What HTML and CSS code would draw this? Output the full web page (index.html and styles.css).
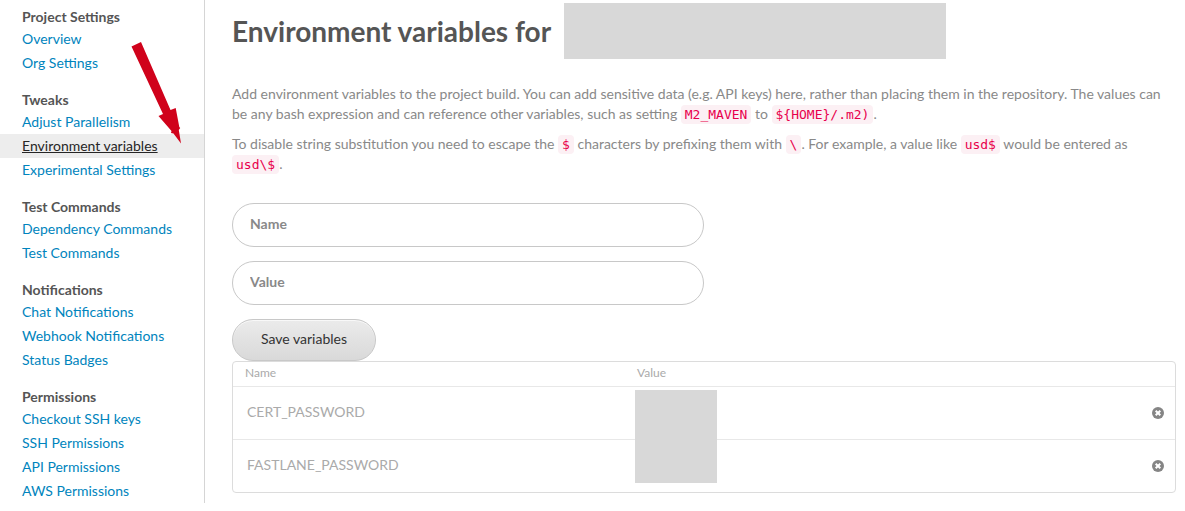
FILE: index.html
```html
<!DOCTYPE html>
<html lang="en">
<head>
<meta charset="utf-8">
<title>Environment variables</title>
<link rel="stylesheet" href="styles.css">
</head>
<body>
<div class="page">
  <nav class="sidebar" aria-label="Project settings">
    <section class="group">
      <h2>Project Settings</h2>
      <ul>
        <li><a href="#overview">Overview</a></li>
        <li><a href="#org">Org Settings</a></li>
      </ul>
    </section>
    <section class="group">
      <h2>Tweaks</h2>
      <ul>
        <li><a href="#parallel">Adjust Parallelism</a></li>
        <li class="active"><a href="#env" aria-current="page">Environment variables</a></li>
        <li><a href="#experimental">Experimental Settings</a></li>
      </ul>
    </section>
    <section class="group">
      <h2>Test Commands</h2>
      <ul>
        <li><a href="#dependency">Dependency Commands</a></li>
        <li><a href="#test">Test Commands</a></li>
      </ul>
    </section>
    <section class="group">
      <h2>Notifications</h2>
      <ul>
        <li><a href="#chat">Chat Notifications</a></li>
        <li><a href="#webhooks">Webhook Notifications</a></li>
        <li><a href="#badges">Status Badges</a></li>
      </ul>
    </section>
    <section class="group">
      <h2>Permissions</h2>
      <ul>
        <li><a href="#checkout">Checkout SSH keys</a></li>
        <li><a href="#ssh">SSH Permissions</a></li>
        <li><a href="#api">API Permissions</a></li>
        <li><a href="#aws">AWS Permissions</a></li>
      </ul>
    </section>
    <svg class="arrow" width="52" height="104" viewBox="130 41 52 104" aria-hidden="true">
      <path d="M131.5 46.5 141 42 170.5 110 175.7 108 179.3 127 180.2 128 178.8 130 181 143.5 173.5 133.5 171 133 171.5 131 158.5 116 163 114Z"/>
    </svg>
  </nav>

  <main class="content">
    <h1>Environment variables for <span class="redacted"></span></h1>
    <div class="intro">
      <p>Add environment variables to the project build. You can add sensitive data (e.g. API keys) here, rather than placing them in the repository. The values can be any bash expression and can reference other variables, such as setting <code>M2_MAVEN</code> to <code>${HOME}/.m2)</code>.</p>
      <p>To disable string substitution you need to escape the <code>$</code> characters by prefixing them with <code>\</code>. For example, a value like <code>usd$</code> would be entered as <code>usd\$</code>.</p>
    </div>
    <form class="form">
      <input type="text" placeholder="Name" aria-label="Name">
      <input type="text" placeholder="Value" aria-label="Value">
      <button type="button" class="save">Save variables</button>
    </form>
    <div class="table-frame">
      <table>
        <thead>
          <tr><th class="name">Name</th><th>Value</th><th class="remove"></th></tr>
        </thead>
        <tbody>
          <tr>
            <td>CERT_PASSWORD</td>
            <td class="value"><span class="mask"></span></td>
            <td class="remove"><button type="button" aria-label="Remove CERT_PASSWORD"><svg width="12" height="12" viewBox="0 0 12 12"><circle cx="6" cy="6" r="6"/><path d="M3.7 3.7 8.3 8.3M8.3 3.7 3.7 8.3"/></svg></button></td>
          </tr>
          <tr>
            <td>FASTLANE_PASSWORD</td>
            <td></td>
            <td class="remove"><button type="button" aria-label="Remove FASTLANE_PASSWORD"><svg width="12" height="12" viewBox="0 0 12 12"><circle cx="6" cy="6" r="6"/><path d="M3.7 3.7 8.3 8.3M8.3 3.7 3.7 8.3"/></svg></button></td>
          </tr>
        </tbody>
      </table>
    </div>
  </main>
</div>
</body>
</html>
```
FILE: styles.css
```css
* { box-sizing: border-box; }

body {
  margin: 0;
  background: #fff;
  color: #898989;
  font: 14px/20px Lato, "Open Sans", sans-serif;
}

.page {
  display: flex;
  align-items: flex-start;
}

.sidebar {
  position: relative;
  flex: 0 0 205px;
  padding-top: 7px;
  border-right: 1px solid #d5d5d5;
}

.group { margin-bottom: 15px; }
.group:nth-of-type(5) { margin-bottom: 0; }

.group h2 {
  margin: 0;
  padding-left: 22px;
  color: #555;
  font-size: 14px;
  line-height: 20px;
}

.group ul {
  margin: 0;
  padding: 0;
  list-style: none;
}

.group li {
  padding-left: 22px;
  line-height: 24px;
}

.group a {
  color: #0084bd;
  text-decoration: none;
}

.group .active { background: #ededed; }

.group .active a {
  color: #262626;
  text-decoration: underline;
}

.arrow {
  position: absolute;
  top: 41px;
  left: 130px;
  fill: #d0021b;
}

.content {
  flex: 1;
  min-width: 0;
  padding: 3px 9px 0 27px;
}

h1 {
  display: flex;
  align-items: center;
  gap: 13px;
  margin: 0 0 25px;
  color: #555;
  font-size: 28px;
  line-height: 56px;
  white-space: nowrap;
}

.redacted {
  width: 382px;
  height: 56px;
  background: #d8d8d8;
}

.intro p { margin: 0 0 10px; }

code {
  padding: 2px 4px;
  border-radius: 4px;
  background: #fcf0f4;
  color: #e8004c;
  font: 13px/16px "DejaVu Sans Mono", monospace;
}

.form {
  display: flex;
  flex-direction: column;
  align-items: flex-start;
  gap: 14px;
  margin-top: 29px;
}

.form input {
  width: 50%;
  height: 44px;
  padding: 0 17px 4px;
  border: 1px solid #c8c8c8;
  border-radius: 22px;
  background: #fff;
  color: #555;
  font: bold 14px/20px Lato, "Open Sans", sans-serif;
}

.form input::placeholder {
  color: #898989;
  opacity: 1;
}

.save {
  height: 42px;
  padding: 0 28px 2px;
  border: 1px solid #c8c8c8;
  border-radius: 21px;
  background: linear-gradient(#ebebeb, #d9d9d9);
  box-shadow: inset 0 1px 0 #f8f8f8;
  color: #333;
  font: 14px/20px Lato, "Open Sans", sans-serif;
}

.table-frame {
  border: 1px solid #dcdcdc;
  border-radius: 4px;
}

table {
  width: 100%;
  border-spacing: 0;
  table-layout: fixed;
}

th {
  height: 24px;
  padding: 0 12px 2px;
  color: #aaa;
  font-size: 12px;
  font-weight: normal;
  line-height: 22px;
  text-align: left;
}

th.name { width: 392px; }
th.remove { width: 42px; }

td {
  height: 53px;
  padding: 0 14px 2px;
  border-top: 1px solid #e8e8e8;
  color: #aaa;
}

.value { position: relative; }

.mask {
  position: absolute;
  top: 3px;
  left: 10px;
  width: 82px;
  height: 93px;
  background: #d8d8d8;
}

td.remove {
  padding: 0 11px 0 0;
  text-align: right;
}

td.remove button {
  display: block;
  margin-left: auto;
  padding: 0;
  border: 0;
  background: none;
}

td.remove svg {
  display: block;
  fill: #858585;
}

td.remove path {
  stroke: #fff;
  stroke-width: 2;
}
```
